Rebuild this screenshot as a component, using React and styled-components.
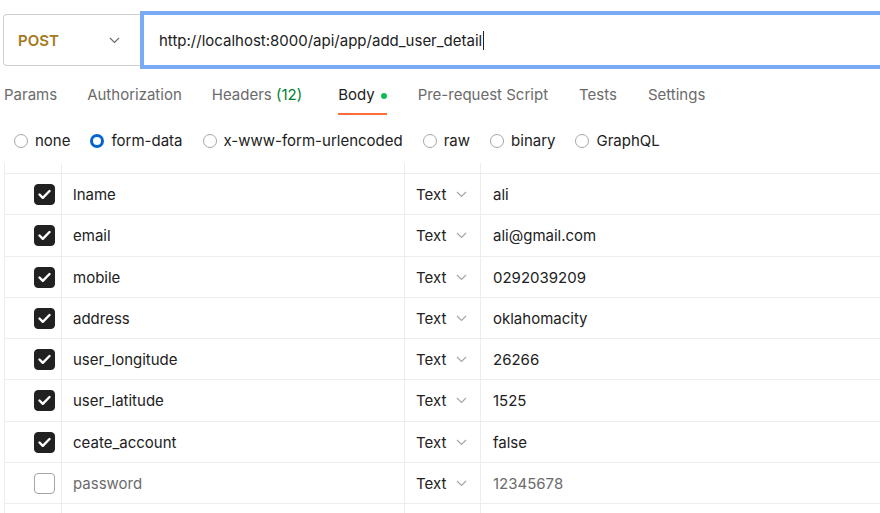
import React from "react";
import styled, { createGlobalStyle } from "styled-components";

const Global = createGlobalStyle`
  html, body { margin: 0; padding: 0; background: #fff; overflow: hidden; }
  body { font-family: Inter, "Noto Sans", "Liberation Sans", sans-serif; font-size: 15px; color: #212121; }
`;

const Page = styled.div`
  width: 880px;
  height: 513px;
  overflow: hidden;
`;

const RequestBar = styled.div`
  display: flex;
  align-items: center;
  padding: 11px 0 0 3px;
  height: 58px;
`;

const MethodBox = styled.div`
  box-sizing: border-box;
  width: 137px;
  height: 52px;
  border: 1px solid #cfcfcf;
  border-right: none;
  border-radius: 4px 0 0 4px;
  display: flex;
  align-items: center;
  justify-content: space-between;
  padding: 0 20px 0 14px;
  flex-shrink: 0;
`;

const MethodName = styled.span`
  color: #a5791c;
  font-weight: 600;
  font-size: 15px;
`;

const UrlBox = styled.div`
  box-sizing: border-box;
  height: 58px;
  width: 760px;
  flex-shrink: 0;
  border: 4px solid #7aaaf2;
  border-right: none;
  display: flex;
  align-items: center;
  padding-left: 15px;
  color: #212121;
`;

const Caret = styled.span`
  display: inline-block;
  width: 1px;
  height: 19px;
  background: #212121;
  margin-left: 1px;
`;

const Tabs = styled.div`
  display: flex;
  padding-left: 4px;
  height: 46px;
`;

const Tab = styled.div`
  box-sizing: border-box;
  padding: 16px 0 8px;
  line-height: 20px;
  height: 46px;
  margin-right: ${(p) => p.$mr}px;
  color: ${(p) => (p.$active ? "#212121" : "#6b6b6b")};
  border-bottom: 2px solid ${(p) => (p.$active ? "#ff6c37" : "transparent")};
  display: flex;
  align-items: flex-start;
  gap: 6px;
  white-space: nowrap;
`;

const Count = styled.span`
  color: #007f31;
`;

const Dot = styled.span`
  width: 6px;
  height: 6px;
  border-radius: 50%;
  background: #0cbb52;
  margin-top: 8px;
`;

const RadioRow = styled.div`
  display: flex;
  align-items: center;
  height: 48px;
  padding-left: 14px;
  gap: 20px;
  box-sizing: border-box;
  padding-top: 3px;
`;

const RadioItem = styled.label`
  display: flex;
  align-items: center;
  gap: 7px;
  color: #212121;
  white-space: nowrap;
`;

const RadioCircle = styled.span`
  box-sizing: border-box;
  width: 14px;
  height: 14px;
  border-radius: 50%;
  border: ${(p) => (p.$on ? "3.5px solid #0265d2" : "1px solid #a6a6a6")};
  background: #fff;
`;

const Table = styled.div`
  margin-left: 4px;
  border-left: 1px solid #ededed;
  width: 900px;
`;

const Row = styled.div`
  display: grid;
  grid-template-columns: 57px 343px 76px 1fr;
  height: ${(p) => p.$h}px;
  box-sizing: border-box;
  border-bottom: 1px solid #ededed;
`;

const Cell = styled.div`
  display: flex;
  align-items: center;
  padding-left: ${(p) => p.$pl || 0}px;
  border-right: ${(p) => (p.$last ? "none" : "1px solid #ededed")};
  color: ${(p) => (p.$muted ? "#6b6b6b" : "#212121")};
  gap: 10px;
  white-space: nowrap;
`;

const CheckCell = styled(Cell)`
  padding-left: 29px;
`;

const Box = styled.span`
  box-sizing: border-box;
  width: 21px;
  height: 21px;
  border-radius: 4px;
  background: ${(p) => (p.$on ? "#212121" : "#fff")};
  border: 1px solid ${(p) => (p.$on ? "#212121" : "#a6a6a6")};
  display: flex;
  align-items: center;
  justify-content: center;
`;

const Chevron = ({ color = "#a6a6a6", w = 11 }) => (
  <svg width={w} height="7" viewBox="0 0 11 7" fill="none">
    <path d="M1 1l4.5 4.5L10 1" stroke={color} strokeWidth="1.2" />
  </svg>
);

const rows = [
  ["lname", "ali", true],
  ["email", "ali@gmail.com", true],
  ["mobile", "0292039209", true],
  ["address", "oklahomacity", true],
  ["user_longitude", "26266", true],
  ["user_latitude", "1525", true],
  ["ceate_account", "false", true],
  ["password", "12345678", false],
];

const heights = [41, 42, 41, 41, 41, 42, 41, 41];

export default function App() {
  return (
    <Page>
      <Global />
      <RequestBar>
        <MethodBox>
          <MethodName>POST</MethodName>
          <Chevron color="#6b6b6b" w={11} />
        </MethodBox>
        <UrlBox>
          http://localhost:8000/api/app/add_user_detail
          <Caret />
        </UrlBox>
      </RequestBar>
      <Tabs>
        <Tab $mr={30}>Params</Tab>
        <Tab $mr={30}>Authorization</Tab>
        <Tab $mr={36}>
          <span>
            Headers <Count>(12)</Count>
          </span>
        </Tab>
        <Tab $mr={31} $active>
          Body <Dot />
        </Tab>
        <Tab $mr={31}>Pre-request Script</Tab>
        <Tab $mr={31}>Tests</Tab>
        <Tab $mr={30}>Settings</Tab>
      </Tabs>
      <RadioRow>
        <RadioItem>
          <RadioCircle />
          none
        </RadioItem>
        <RadioItem>
          <RadioCircle $on />
          form-data
        </RadioItem>
        <RadioItem>
          <RadioCircle />
          x-www-form-urlencoded
        </RadioItem>
        <RadioItem>
          <RadioCircle />
          raw
        </RadioItem>
        <RadioItem>
          <RadioCircle />
          binary
        </RadioItem>
        <RadioItem>
          <RadioCircle />
          GraphQL
        </RadioItem>
      </RadioRow>
      <Table>
        <Row $h={11}>
          <Cell />
          <Cell />
          <Cell />
          <Cell $last />
        </Row>
        {rows.map(([k, v, on], i) => (
          <Row key={k} $h={heights[i]}>
            <CheckCell>
              <Box $on={on}>
                {on && (
                  <svg width="13" height="11" viewBox="0 0 13 11" fill="none">
                    <path d="M1.5 5.5l3.3 3.3L11.5 2" stroke="#fff" strokeWidth="2.4" strokeLinecap="round" strokeLinejoin="round" />
                  </svg>
                )}
              </Box>
            </CheckCell>
            <Cell $pl={11} $muted={!on}>{k}</Cell>
            <Cell $pl={11}>
              Text <Chevron />
            </Cell>
            <Cell $pl={12} $last $muted={!on}>{v}</Cell>
          </Row>
        ))}
        <Row $h={20}>
          <Cell />
          <Cell />
          <Cell />
          <Cell $last />
        </Row>
      </Table>
    </Page>
  );
}
